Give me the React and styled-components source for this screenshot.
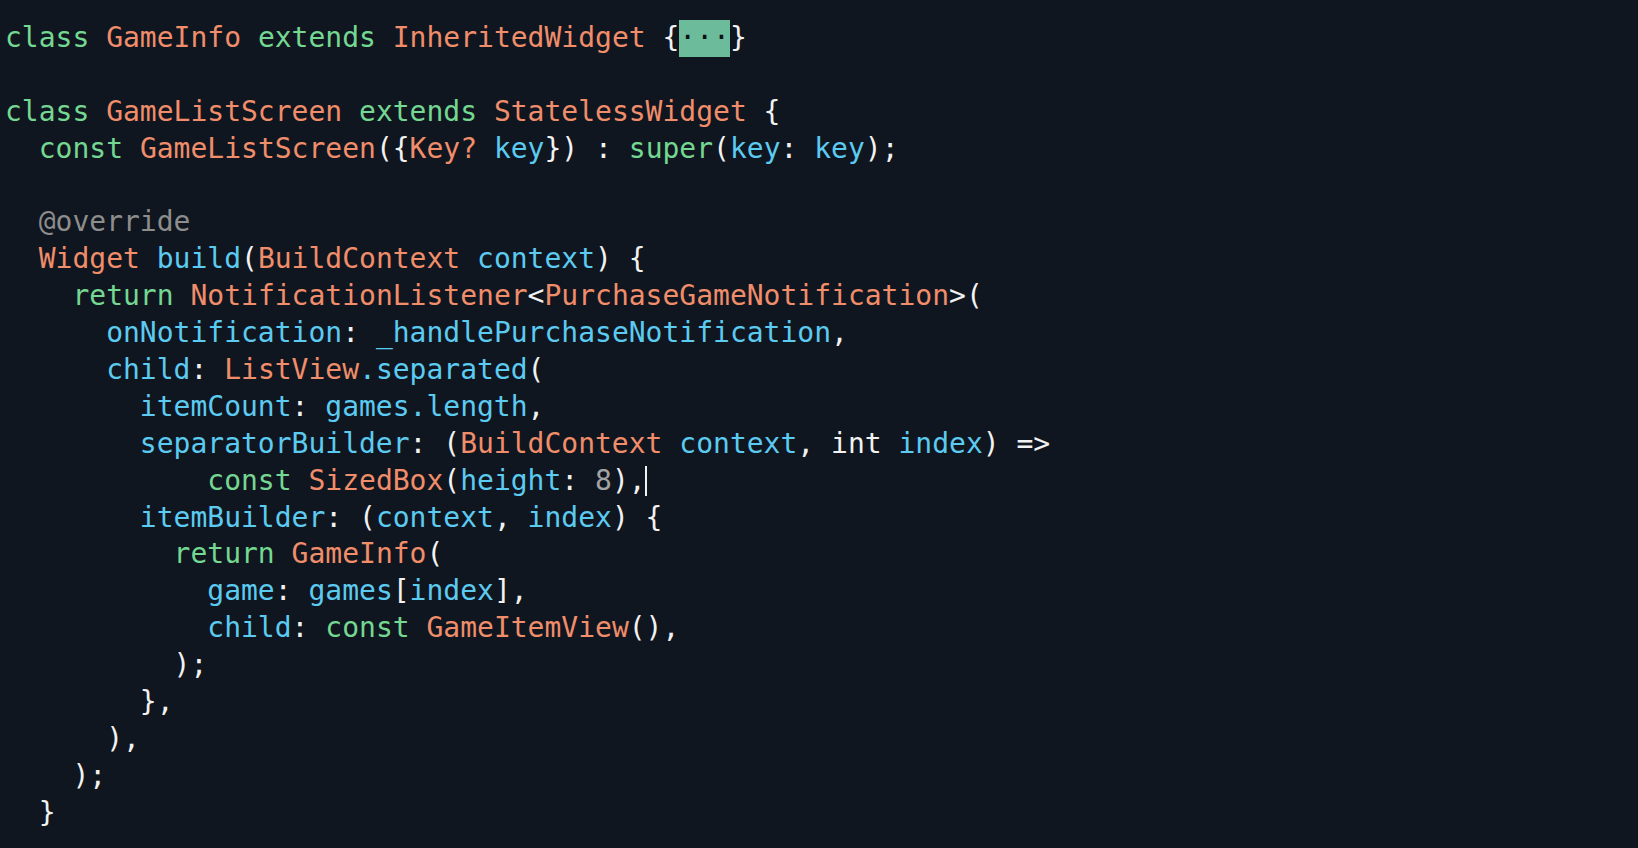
import React from "react";
import styled, { createGlobalStyle } from "styled-components";

const Global = createGlobalStyle`
  html, body { margin: 0; padding: 0; background: #10161f; }
  body { width: 1638px; height: 848px; overflow: hidden; }
`;

const Editor = styled.div`
  width: 1638px;
  height: 848px;
  box-sizing: border-box;
  background: #10161f;
  padding: 20px 0 0 5px;
  font-family: "DejaVu Sans Mono", "Liberation Mono", monospace;
  font-size: 28px;
  color: #f2f2f2;
  display: flex;
  flex-direction: column;
`;

const Line = styled.div`
  height: 36.9px;
  line-height: 36.9px;
  white-space: pre;
  display: flex;
  align-items: center;
`;

const COLORS = {
  k: "#74d892",
  t: "#f08d6a",
  i: "#5ccbf1",
  p: "#f2f2f2",
  a: "#8d8d8d",
  n: "#a3a3a3",
};

const Tok = styled.span`
  color: ${(p) => COLORS[p.$k] || "#f2f2f2"};
`;

const Fold = styled.span`
  background: #6cbb9b;
  color: #0b0f14;
  height: 36.4px;
  display: inline-flex;
  align-items: center;
`;

const Caret = styled.span`
  display: inline-block;
  width: 2px;
  height: 30px;
  background: #f2f2f2;
  margin-left: -1px;
`;

const lines = [
  [["k", "class "], ["t", "GameInfo "], ["k", "extends "], ["t", "InheritedWidget "], ["p", "{"], ["fold", "···"], ["p", "}"]],
  [],
  [["k", "class "], ["t", "GameListScreen "], ["k", "extends "], ["t", "StatelessWidget "], ["p", "{"]],
  [["p", "  "], ["k", "const "], ["t", "GameListScreen"], ["p", "({"], ["t", "Key? "], ["i", "key"], ["p", "}) : "], ["k", "super"], ["p", "("], ["i", "key"], ["p", ": "], ["i", "key"], ["p", ");"]],
  [],
  [["p", "  "], ["a", "@override"]],
  [["p", "  "], ["t", "Widget "], ["i", "build"], ["p", "("], ["t", "BuildContext "], ["i", "context"], ["p", ") {"]],
  [["p", "    "], ["k", "return "], ["t", "NotificationListener"], ["p", "<"], ["t", "PurchaseGameNotification"], ["p", ">("]],
  [["p", "      "], ["i", "onNotification"], ["p", ": "], ["i", "_handlePurchaseNotification"], ["p", ","]],
  [["p", "      "], ["i", "child"], ["p", ": "], ["t", "ListView"], ["i", ".separated"], ["p", "("]],
  [["p", "        "], ["i", "itemCount"], ["p", ": "], ["i", "games.length"], ["p", ","]],
  [["p", "        "], ["i", "separatorBuilder"], ["p", ": ("], ["t", "BuildContext "], ["i", "context"], ["p", ", int "], ["i", "index"], ["p", ") =>"]],
  [["p", "            "], ["k", "const "], ["t", "SizedBox"], ["p", "("], ["i", "height"], ["p", ": "], ["n", "8"], ["p", "),"], ["caret", ""]],
  [["p", "        "], ["i", "itemBuilder"], ["p", ": ("], ["i", "context"], ["p", ", "], ["i", "index"], ["p", ") {"]],
  [["p", "          "], ["k", "return "], ["t", "GameInfo"], ["p", "("]],
  [["p", "            "], ["i", "game"], ["p", ": "], ["i", "games"], ["p", "["], ["i", "index"], ["p", "],"]],
  [["p", "            "], ["i", "child"], ["p", ": "], ["k", "const "], ["t", "GameItemView"], ["p", "(),"]],
  [["p", "          );"]],
  [["p", "        },"]],
  [["p", "      ),"]],
  [["p", "    );"]],
  [["p", "  }"]],
];

export default function App() {
  return (
    <>
      <Global />
      <Editor>
        {lines.map((toks, li) => (
          <Line key={li}>
            {toks.map(([k, text], ti) =>
              k === "fold" ? (
                <Fold key={ti}>{text}</Fold>
              ) : k === "caret" ? (
                <Caret key={ti} />
              ) : (
                <Tok key={ti} $k={k}>
                  {text}
                </Tok>
              )
            )}
          </Line>
        ))}
      </Editor>
    </>
  );
}
